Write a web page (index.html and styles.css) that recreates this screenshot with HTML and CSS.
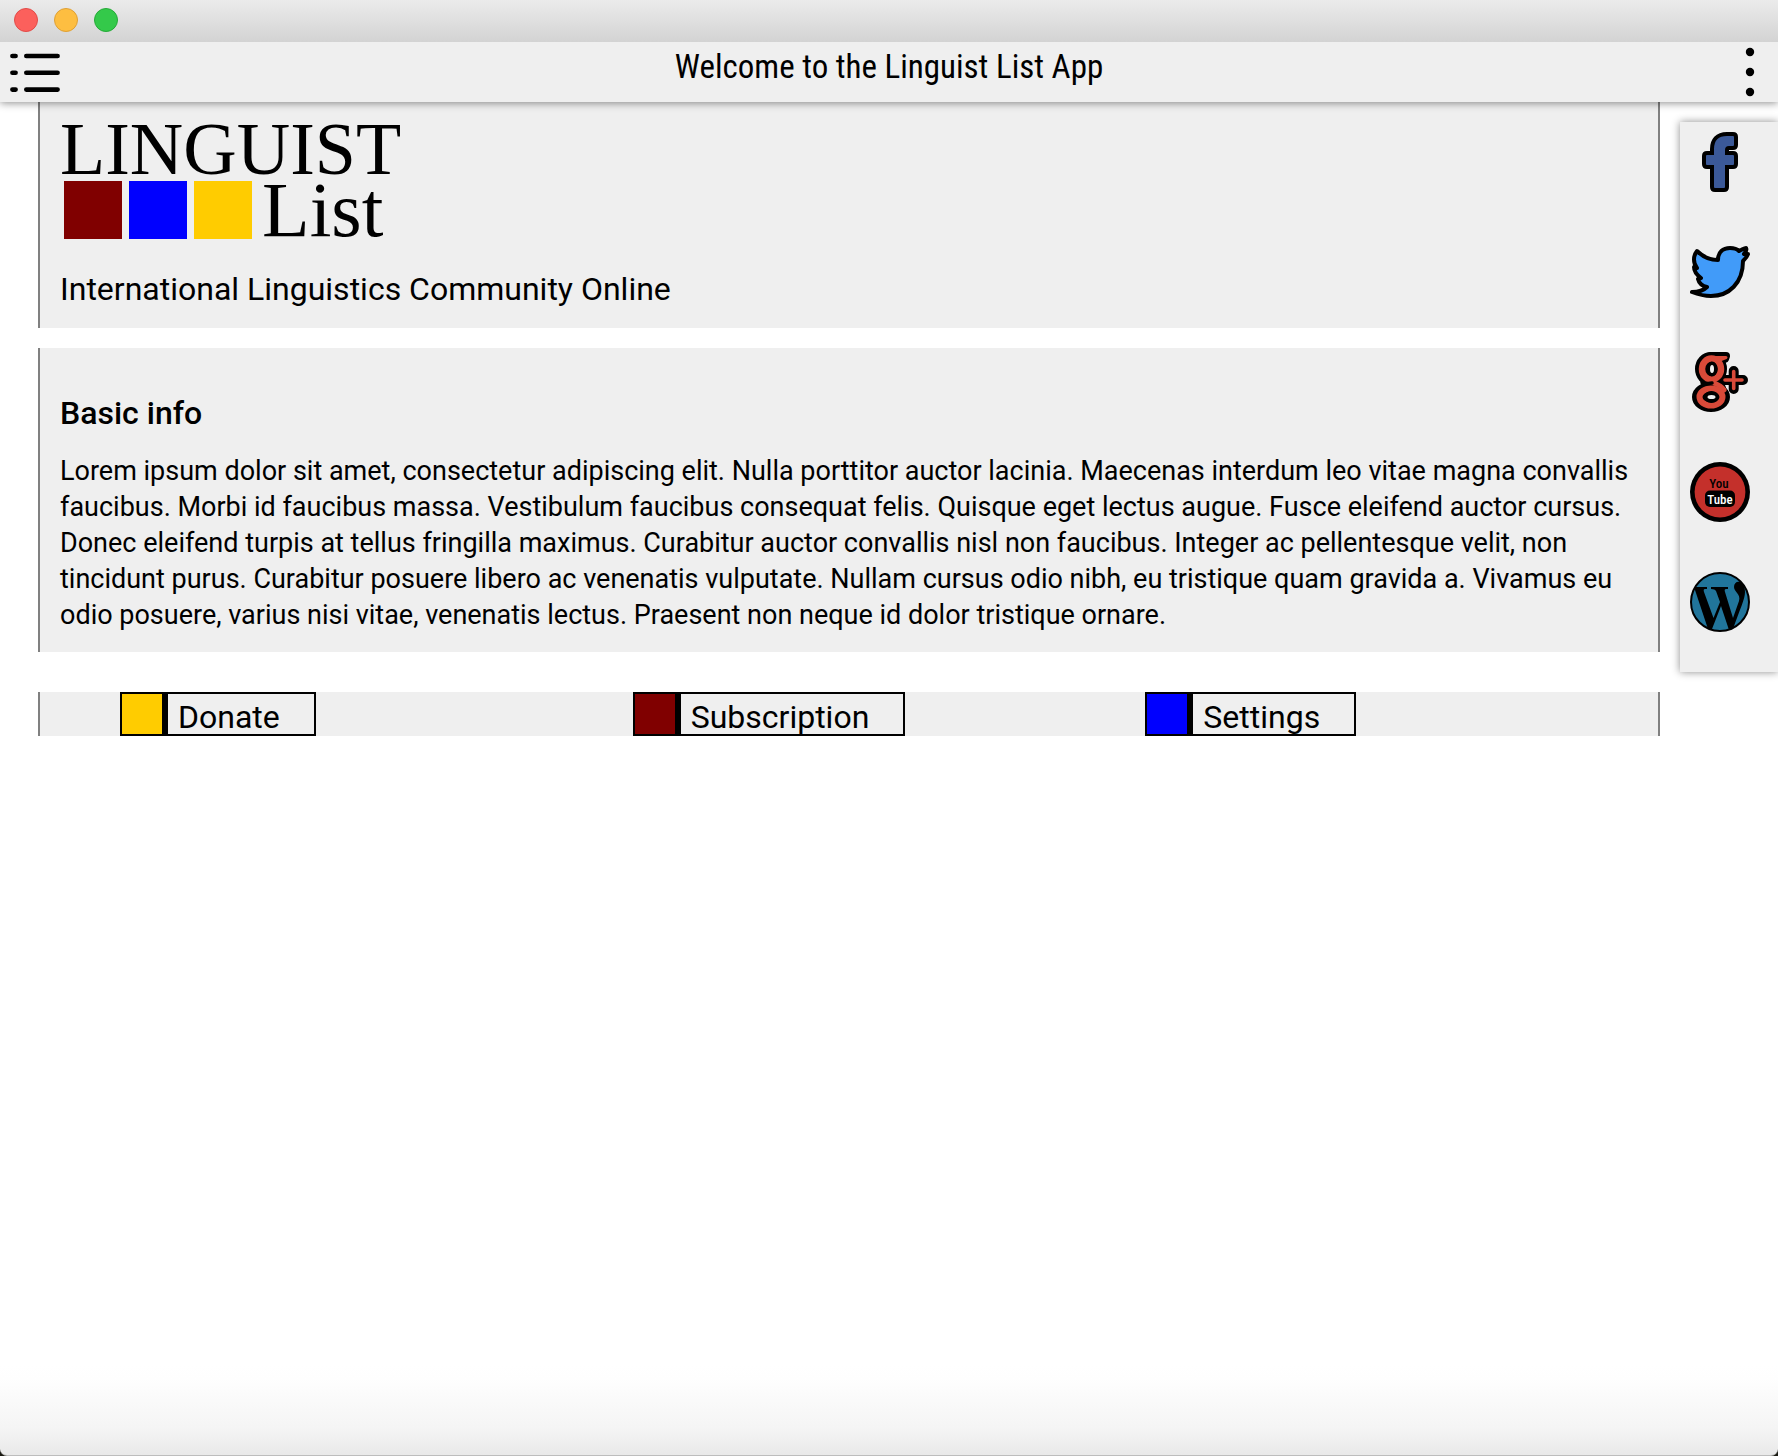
FILE: index.html
```html
<!DOCTYPE html>
<html lang="en">
<head>
<meta charset="utf-8">
<meta name="viewport" content="width=device-width, initial-scale=1">
<title>Linguist List App</title>
<link rel="stylesheet" href="styles.css">
</head>
<body>
<div class="titlebar">
  <button class="light light-close" type="button" aria-label="Close"></button>
  <button class="light light-minimize" type="button" aria-label="Minimize"></button>
  <button class="light light-zoom" type="button" aria-label="Zoom"></button>
</div>
<header class="toolbar">
  <button class="icon-button" type="button" aria-label="Menu">
    <svg width="50" height="40" viewBox="0 0 50 40" fill="none" stroke="#000" stroke-width="4.6" stroke-linecap="round"><path d="M2.4 4H5.600M16.3 4H47.600M2.4 20.800H5.600M16.3 20.800H47.600M2.4 37.600H5.600M16.3 37.600H47.600"/></svg>
  </button>
  <h1 class="toolbar-title">Welcome to the Linguist List App</h1>
  <button class="icon-button icon-button-end" type="button" aria-label="More options">
    <svg width="16" height="60" viewBox="0 0 16 60"><circle cx="8" cy="10" r="4.2"/><circle cx="8" cy="30" r="4.2"/><circle cx="8" cy="50" r="4.2"/></svg>
  </button>
</header>
<div class="layout">
  <main class="content">
    <section class="card intro">
      <div class="logo">
        <div class="logo-top">LINGUIST</div>
        <div class="logo-bottom">
          <span class="square red"></span><span class="square blue"></span><span class="square gold"></span>
          <span class="logo-list">List</span>
        </div>
      </div>
      <p class="tagline">International Linguistics Community Online</p>
    </section>
    <section class="card info">
      <h2 class="info-title">Basic info</h2>
      <p class="info-text">Lorem ipsum dolor sit amet, consectetur adipiscing elit. Nulla porttitor auctor lacinia. Maecenas interdum leo vitae magna convallis faucibus. Morbi id faucibus massa. Vestibulum faucibus consequat felis. Quisque eget lectus augue. Fusce eleifend auctor cursus. Donec eleifend turpis at tellus fringilla maximus. Curabitur auctor convallis nisl non faucibus. Integer ac pellentesque velit, non tincidunt purus. Curabitur posuere libero ac venenatis vulputate. Nullam cursus odio nibh, eu tristique quam gravida a. Vivamus eu odio posuere, varius nisi vitae, venenatis lectus. Praesent non neque id dolor tristique ornare.</p>
    </section>
    <section class="card actions">
      <button class="action" type="button"><span class="swatch gold"></span><span class="action-label">Donate</span></button>
      <button class="action" type="button"><span class="swatch red"></span><span class="action-label">Subscription</span></button>
      <button class="action" type="button"><span class="swatch blue"></span><span class="action-label">Settings</span></button>
    </section>
  </main>
  <nav class="social" aria-label="Social media">
    <a href="#facebook" aria-label="Facebook">
      <svg width="60" height="60" viewBox="0 0 60 60"><path d="M46 5Q46 2 43 2H37C27 2 22 8 22 17V21H17Q14 21 14 24V32Q14 35 17 35H22V55Q22 58 25 58H34Q37 58 37 55V35H43Q46 35 46 32V24Q46 21 43 21H37V18Q37 16 39 16H43Q46 16 46 13Z" fill="#3b5998" stroke="#000" stroke-width="4"/></svg>
    </a>
    <a href="#twitter" aria-label="Twitter">
      <svg width="60" height="60" viewBox="0 0 60 60"><path d="M2 50C8 50 13 49 17 45C12 44 9 41 8 37L11 36C7 33 4 30 4 25L7 26C3 21 3 14 7 9C13 15 20 18 28 18C28 10 33 6 40 6C44 6 47 7 49 9C52 8 54 6 56 6C57 8 56 10 54 12L58 12C57 15 55 17 53 19C53 41 39 54 21 54C13 54 7 52 2 50Z" fill="#419bf9" stroke="#000" stroke-width="4" stroke-linejoin="round"/></svg>
    </a>
    <a href="#google-plus" aria-label="Google Plus">
      <svg width="60" height="60" viewBox="0 0 60 60">
        <g fill="none" stroke-linecap="round" stroke-linejoin="round">
          <g fill="#000" stroke="#000" stroke-width="8"><ellipse cx="21" cy="17" rx="12" ry="13"/><path d="M21 4H36L35 7H29L32 15"/><ellipse cx="21" cy="45" rx="15" ry="11"/><path d="M27 26L32 36"/><path d="M43.7 19V37M34.5 28H53" stroke-width="10"/></g>
          <g stroke="#d94a39"><path d="M22 5.5H36L31 7.5" stroke-width="3"/><ellipse cx="21.5" cy="17" rx="9.5" ry="10.5" stroke-width="6.5"/><path d="M18 29C23 31 30 32 34 38" stroke-width="5"/><ellipse cx="21" cy="45" rx="11.5" ry="8.5" stroke-width="6"/><path d="M43.7 19.5V36.5M35 28H52" stroke-width="3.6"/></g>
          <path d="M12 30.5Q17 32 22 31" stroke="#000" stroke-width="3.5"/>
        </g>
        <ellipse cx="22" cy="17" rx="5.5" ry="7.5"/><ellipse cx="22" cy="17" rx="2" ry="4" fill="#efefef"/><ellipse cx="21.5" cy="45" rx="7.5" ry="6"/><ellipse cx="21.5" cy="45" rx="4" ry="2" fill="#efefef"/>
      </svg>
    </a>
    <a href="#youtube" aria-label="YouTube">
      <svg width="60" height="60" viewBox="0 0 60 60"><circle cx="30" cy="30" r="30"/><circle cx="30" cy="30" r="25.4" fill="#c4302b"/><rect x="15" y="28.6" width="30" height="16.4" rx="5"/><text class="tube" x="29" y="26" text-anchor="middle">You</text><text class="tube tube-light" x="30" y="42" text-anchor="middle">Tube</text></svg>
    </a>
    <a href="#wordpress" aria-label="WordPress">
      <svg width="60" height="60" viewBox="0 0 60 60"><circle cx="30" cy="30" r="29" fill="#21759b" stroke="#000" stroke-width="2"/><path d="M4 15H17V17H15Q13 17 14 20L23.500 46L30 30L26 19Q25 17 21 17V15H38V17H36Q34 17 35 20L43 46L49 29C51 22 44 20 44 15C44 11 47 9 50 10C54 12 55 16 55 20C55 27 50 37 43 57L39 58L31 34L22 57L18 57L6 21Z"/></svg>
    </a>
  </nav>
</div>
</body>
</html>
```
FILE: styles.css
```css
* { box-sizing: border-box; }

html { background: #1a1a12; }

body {
  margin: 0;
  min-height: 100vh;
  font-family: Roboto, "Liberation Sans", sans-serif;
  color: #000;
  background: linear-gradient(to top, #e9e9e9, #f5f5f5 28px, #fefefe 76px, #fff 90px);
  border-bottom: 1px solid #bdbdbd;
  border-radius: 0 0 7px 7px;
}

h1, h2, p { margin: 0; }

button {
  padding: 0;
  border: 0;
  background: none;
  font: inherit;
  color: inherit;
}

svg { display: block; }

.titlebar {
  display: flex;
  gap: 16px;
  height: 42px;
  padding: 8px 14px;
  background: linear-gradient(#ebebeb, #d3d3d3);
}

.light {
  width: 24px;
  height: 24px;
  border: 1px solid;
  border-radius: 50%;
}

.light-close { background: #fc605c; border-color: #e24b48; }
.light-minimize { background: #fdbe41; border-color: #dfa035; }
.light-zoom { background: #34c94a; border-color: #25aa38; }

.toolbar {
  position: relative;
  display: grid;
  grid-template-columns: 1fr auto 1fr;
  height: 60px;
  padding: 0 10px;
  background: #efefef;
  box-shadow: 0 1px 8px rgba(0, 0, 0, 0.45);
  clip-path: inset(0 0 -16px 0);
}

.icon-button { justify-self: start; align-self: center; }
.icon-button-end { justify-self: end; margin-right: 10px; }

.toolbar-title {
  font-family: "Roboto Condensed", "Liberation Sans Narrow", Roboto, sans-serif;
  font-size: 33px;
  line-height: 50px;
  font-weight: 400;
}

.layout {
  display: grid;
  grid-template-columns: 1fr 98px;
  gap: 20px;
  align-items: start;
  padding-left: 38px;
}

.card {
  padding: 20px;
  background: #efefef;
  border: solid #808080;
  border-width: 0 2px;
}

.intro { padding-bottom: 16px; }

.logo { display: grid; height: 144px; align-content: start; }

.logo-top,
.logo-list {
  font-family: "Liberation Serif", serif;
  font-size: 74px;
  line-height: 54px;
}

.logo-list { padding-left: 3px; font-size: 78px; line-height: 58px; }

.logo-bottom { display: flex; gap: 7px; margin-top: 5px; }

.square { width: 58px; height: 58px; }
.square:first-child { margin-left: 4px; }

.red { background: #800000; }
.blue { background: #0000ff; }
.gold { background: #ffcc00; }

.tagline { font-size: 32px; line-height: 46px; }

.info { margin-top: 20px; padding: 42px 20px 19px; }

.info-title {
  margin-bottom: 17px;
  font-size: 32px;
  line-height: 46px;
  font-weight: 500;
}

.info-text { font-size: 27px; line-height: 36px; }

.actions {
  display: grid;
  grid-template-columns: repeat(3, 1fr);
  justify-items: start;
  margin-top: 40px;
  padding: 0 0 0 80px;
}

.action {
  display: flex;
  height: 44px;
  border: 2px solid #000;
}

.swatch { width: 46px; height: 40px; border-right: 6px solid #000; }

.action-label {
  padding: 0 34px 0 10px;
  font-size: 32px;
  line-height: 46px;
}

.social {
  display: grid;
  gap: 50px;
  margin-top: 20px;
  padding: 10px 10px 40px;
  background: #efefef;
  box-shadow: 0 0 8px rgba(0, 0, 0, 0.45);
}

.social a { width: 60px; height: 60px; color: inherit; }

.tube {
  font-family: "Roboto Condensed", "Liberation Sans Narrow", Roboto, sans-serif;
  font-size: 13px;
  font-weight: 500;
}

.tube-light { fill: #fff; }
```
